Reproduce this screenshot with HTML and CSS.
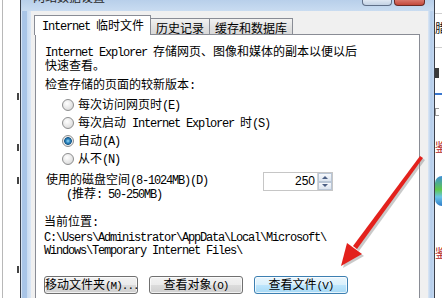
FILE: index.html
```html
<!DOCTYPE html>
<html lang="zh-CN">
<head>
  <meta charset="UTF-8" />
  <title>网站数据设置</title>
  <link rel="stylesheet" href="styles.css">
</head>
<body>

<div class="screen">
  <!-- pagina de fondo, lado izquierdo -->
  <div class="bg-left">
    <i class="mark" style="margin-top: 93px"></i>
    <i class="mark" style="margin-top: 44px"></i>
    <i class="mark" style="margin-top: 26px"></i>
    <i class="mark" style="margin-top: 82px"></i>
  </div>

  <div class="window">
    <div class="titlebar">
      <span class="title">网站数据设置</span>
      <span class="tb-btns"><span class="tb-help"></span><span class="tb-close"></span></span>
    </div>

    <div class="frame">
      <div class="dialog">
        <div class="tabs">
          <div class="tab active"><span class="en">Internet&nbsp;</span>临时文件</div>
          <div class="tab">历史记录</div>
          <div class="tab">缓存和数据库</div>
        </div>

        <div class="panel">
          <p class="intro"><span class="en">Internet Explorer&nbsp;</span>存储网页、图像和媒体的副本以便以后<br>快速查看。</p>
          <p class="label">检查存储的页面的较新版本<span class="en">:</span></p>
          <ul class="radios">
            <li><span class="radio"></span><span>每次访问网页时<span class="en">(E)</span></span></li>
            <li><span class="radio"></span><span>每次启动<span class="en">&nbsp;Internet Explorer&nbsp;</span>时<span class="en">(S)</span></span></li>
            <li><span class="radio on"></span><span>自动<span class="en">(A)</span></span></li>
            <li><span class="radio"></span><span>从不<span class="en">(N)</span></span></li>
          </ul>

          <div class="disk">
            <p class="disk-text">使用的磁盘空间<span class="en">(8-1024MB)(D)</span><br><span class="indent"><span class="en">(</span>推荐<span class="en">: 50-250MB)</span></span></p>
            <div class="spin">
              <span class="spin-val">250</span>
              <span class="spin-btns"><i class="up"></i><i class="down"></i></span>
            </div>
          </div>

          <div class="location">
            <p>当前位置<span class="en">:</span></p>
            <p class="path en">C:\Users\Administrator\AppData\Local\Microsoft\<br>Windows\Temporary Internet Files\</p>
          </div>

          <div class="buttons">
            <button class="btn">移动文件夹<span class="en">(M)...</span></button>
            <button class="btn">查看对象<span class="en">(O)</span></button>
            <button class="btn hot">查看文件<span class="en">(V)</span></button>
          </div>
        </div>
      </div>
    </div>
  </div>

  <!-- pagina de fondo, lado derecho -->
  <div class="bg-right">
    <i class="rline" style="margin-top: 13px"></i>
    <span class="rglyph dark" style="margin-top: 7px">腊</span>
    <i class="rline" style="margin-top: 12px"></i>
    <i class="rblock"></i>
    <i class="rblue"></i>
    <i class="rbracket"></i>
    <span class="rglyph red" style="margin-top: 24px">鉴</span>
    <i class="ricon"></i>
    <span class="rglyph red" style="margin-top: 40px">鉴</span>
  </div>

  <svg class="arrow" width="442" height="298" viewBox="0 0 442 298">
    <g fill="#8a8a8a" opacity="0.45" transform="translate(2 2)">
      <polygon points="420,156 423,158 357,249 353,246" />
      <polygon points="341,266 347,243 362,254" />
    </g>
    <g fill="#e3211c">
      <polygon points="420,156 423,158 357,249 353,246" />
      <polygon points="341,266 347,243 362,254" />
    </g>
  </svg>
</div>

</body>
</html>
```

FILE: styles.css
```css
* {
  box-sizing: border-box;
}
body {
  margin: 0;
  background: #fff;
  font-family: "Noto Sans CJK SC", sans-serif;
  font-size: 12px;
  color: #000;
}
p, ul {
  margin: 0;
  padding: 0;
}
ul {
  list-style: none;
}
.en {
  font-family: "Liberation Mono", monospace;
  font-size: 12px;
  letter-spacing: -1.2px;
}
.screen {
  position: relative;
  width: 442px;
  height: 298px;
  overflow: hidden;
  display: flex;
}

/* fondo */
.bg-left {
  width: 20px;
  flex: none;
  display: flex;
  flex-direction: column;
  align-items: flex-end;
  background: linear-gradient(to right, #fff 2px, #b8b8b8 2px, #b8b8b8 3px, #fff 3px);
}
.mark {
  width: 2px;
  height: 7px;
  margin-right: 1px;
  background: #444;
}
.bg-right {
  width: 7px;
  flex: none;
  display: flex;
  flex-direction: column;
  background: #fff;
  overflow: hidden;
}
.rline {
  height: 1px;
  background: #cfcfcf;
}
.rglyph {
  height: 14px;
  line-height: 14px;
  font-size: 12px;
  white-space: nowrap;
}
.rglyph.dark { color: #111; }
.rglyph.red { color: #b3262a; }
.rblock {
  width: 4px;
  height: 10px;
  margin-top: 20px;
  background: #3a3a3a;
}
.rblue {
  height: 2px;
  margin-top: 15px;
  background: #3a78d0;
}
.rbracket {
  width: 4px;
  height: 8px;
  margin-top: 13px;
  border: 1px solid #9a9a9a;
  border-right: none;
}
.ricon {
  height: 30px;
  margin-top: 22px;
  border-radius: 12px 0 0 12px;
  background: linear-gradient(#3d8fd8, #5ec84c 45%, #69c4e8 70%, #2e7cc9);
}

/* ventana */
.window {
  width: 415px;
  flex: none;
  display: flex;
  flex-direction: column;
  border-left: 1px solid #3a404c;
  border-right: 1px solid #3a404c;
  background: #c7daf0;
}
.titlebar {
  height: 11px;
  flex: none;
  display: flex;
  justify-content: space-between;
  padding: 0 9px 0 12px;
  background: linear-gradient(#b8cfea, #c9dcf1);
}
.title {
  height: 12px;
  margin-top: -9px;
  line-height: 12px;
  color: #2a2a2a;
}
.tb-btns {
  display: flex;
  gap: 2px;
  align-items: flex-start;
}
.tb-help, .tb-close {
  width: 30px;
  height: 6px;
  border: 1px solid #5f6f88;
  border-top: none;
  border-radius: 0 0 4px 4px;
}
.tb-help {
  background: linear-gradient(#dfe8f3, #c3d2e5);
}
.tb-close {
  width: 31px;
  border-color: #6b2a24;
  background: linear-gradient(#d9766b, #c2483b);
}
.frame {
  flex: 1;
  display: flex;
  padding: 0 6px 0 10px;
  background:
    linear-gradient(to right, #d6e4f4 1px, #a9c5e7 1px, #a9c5e7 6px, #c8dbf1 6px, #dbe7f5 10px) left top / 10px 100% no-repeat,
    linear-gradient(to right, #dbe7f5, #b4cdeb 3px, #c4d8ef) right top / 6px 100% no-repeat,
    #c7daf0;
}
.dialog {
  flex: 1;
  display: flex;
  flex-direction: column;
  padding: 4px 8px 0 4px;
  background: #f0f0f0;
}

/* pestañas */
.tabs {
  display: flex;
  align-items: flex-end;
  height: 19px;
  margin-left: -1px;
}
.tab {
  height: 16px;
  line-height: 15px;
  padding: 1px 5px 0 5px;
  margin-left: -1px;
  border: 1px solid #898c95;
  border-bottom: none;
  background: linear-gradient(#f2f2f2, #e3e3e3 50%, #d9d9d9);
  white-space: nowrap;
}
.tab.active {
  position: relative;
  z-index: 1;
  width: 117px;
  height: 20px;
  line-height: 18px;
  margin-left: 0;
  margin-bottom: -1px;
  padding: 0 0 0 7px;
  background: #fff;
}
.panel {
  flex: 1;
  display: flex;
  flex-direction: column;
  padding: 10px 0 12px 9px;
  border: 1px solid #898c95;
  background: #fff;
  line-height: 12px;
  white-space: nowrap;
}
.label {
  margin-top: 7px;
}
.radios {
  margin-top: 4px;
}
.radios li {
  height: 18px;
  display: flex;
  align-items: center;
  padding-left: 17px;
}
.radio {
  flex: none;
  width: 12px;
  height: 12px;
  margin-right: 4px;
  border-radius: 50%;
  border: 1px solid #8d8e8f;
  background: radial-gradient(circle at 40% 35%, #fff, #e4e4e4 60%, #cdcdcd);
}
.radio.on {
  background: radial-gradient(circle, #9bdcf6 0, #2f88c2 2px, #17598a 3.5px, #e8e8e8 4.2px, #f6f6f6 6px);
}
.disk {
  display: flex;
  margin-top: 5px;
  margin-left: 1px;
}
.disk-text {
  width: 217px;
  flex: none;
}
.indent {
  padding-left: 20px;
}
.spin {
  display: flex;
  width: 70px;
  height: 19px;
  margin-top: -1px;
  border: 1px solid #c6c6c6;
}
.spin-val {
  flex: 1;
  text-align: right;
  padding-right: 2px;
  font-family: "Liberation Sans", sans-serif;
  font-size: 12px;
  line-height: 17px;
}
.spin-btns {
  width: 15px;
  display: flex;
  flex-direction: column;
  border-left: 1px solid #d4d4d4;
}
.spin-btns i {
  flex: 1;
  display: flex;
  align-items: center;
  justify-content: center;
  border: 1px solid #b9c6d6;
  background: linear-gradient(#f7f9fc, #dbe4ef);
}
.spin-btns i::after {
  content: "";
  border-left: 3px solid transparent;
  border-right: 3px solid transparent;
}
.up::after {
  border-bottom: 3px solid #4b5f84;
}
.down::after {
  border-top: 3px solid #4b5f84;
}
.location {
  margin-top: 14px;
  margin-left: -1px;
}
.path {
  margin-top: 3px;
  line-height: 13px;
}
.buttons {
  display: flex;
  gap: 11px;
  margin-top: 18px;
  margin-left: -1px;
}
.btn {
  width: 94px;
  height: 18px;
  padding: 0;
  border: 1px solid #707070;
  border-radius: 3px;
  font-family: "Noto Sans CJK SC", sans-serif;
  font-size: 12px;
  line-height: 14px;
  color: #000;
  white-space: nowrap;
  background: linear-gradient(#f2f2f2, #ebebeb 50%, #dcdcdc 50%, #cfcfcf);
  box-shadow: inset 0 0 0 1px rgba(255,255,255,0.7);
}
.btn .en {
  font-size: 11px;
  letter-spacing: -1px;
}
.btn.hot {
  border-color: #3c7fb1;
  background: linear-gradient(#eaf6fd, #d9f0fc 50%, #bee6fd 50%, #a7d9f5);
}
.arrow {
  position: absolute;
  left: 0;
  top: 0;
  pointer-events: none;
}
```
